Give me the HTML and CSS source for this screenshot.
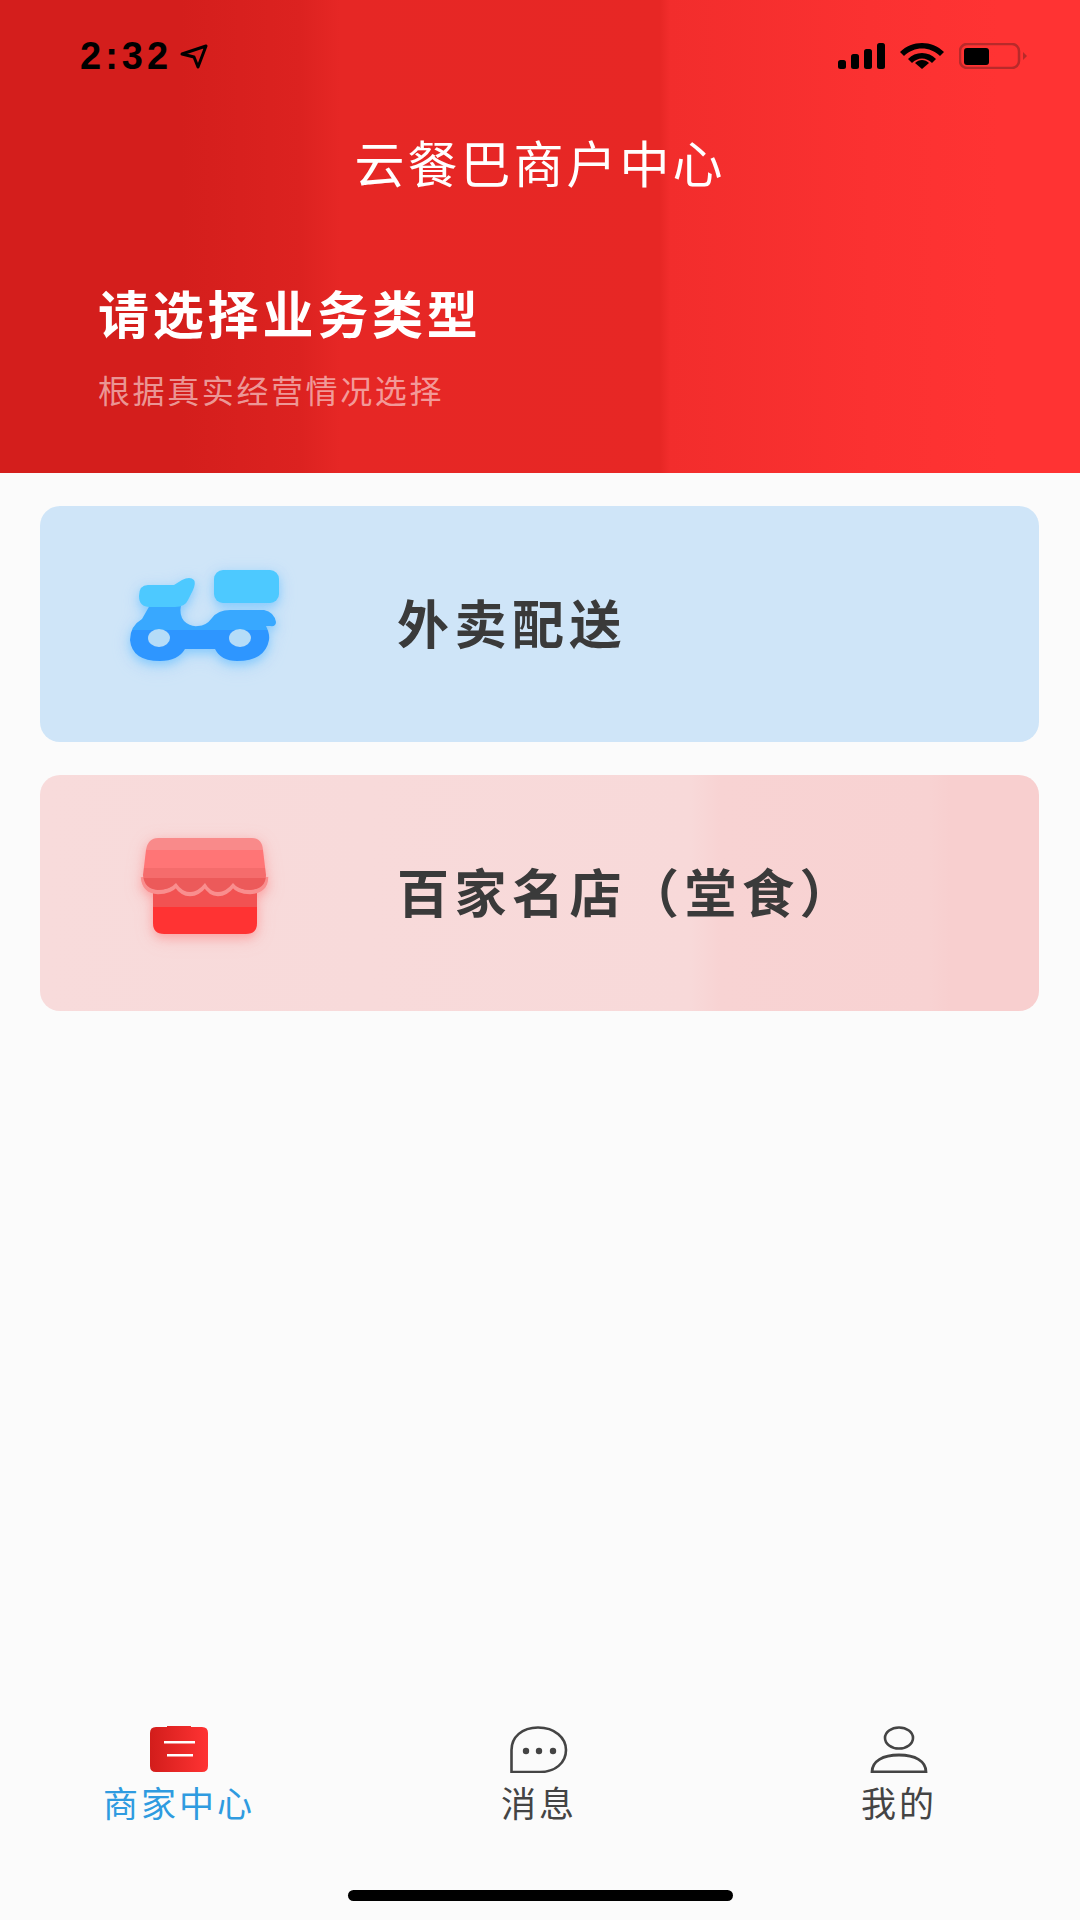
FILE: index.html
```html
<!DOCTYPE html>
<html lang="zh-CN">

<head>
    <meta charset="UTF-8">
    <title>云餐巴商户中心</title>
    <link rel="stylesheet" href="styles.css">
</head>

<body>

    <header class="top">
        <div class="status">
            <div class="status-left">
                <span class="time">2:32</span>
                <svg class="arrow" width="28" height="25" viewBox="0 0 28 25">
                    <path d="M2 10 L26 2 L18 23 L14 13 Z" fill="none" stroke="#000" stroke-width="3" stroke-linejoin="round"/>
                </svg>
            </div>
            <div class="status-right">
                <svg width="47" height="26" viewBox="0 0 47 26">
                    <rect x="0" y="17" width="8" height="9" rx="2.5"/>
                    <rect x="13" y="11" width="8" height="15" rx="2.5"/>
                    <rect x="26" y="6" width="8" height="20" rx="2.5"/>
                    <rect x="39" y="0" width="8" height="26" rx="2.5"/>
                </svg>
                <svg width="44" height="26" viewBox="0 0 44 26">
                    <path d="M0 9 C12 -3 32 -3 44 9 L40 13 C30 3 14 3 4 13 Z"/>
                    <path d="M8 16 C15 8 29 8 36 16 L32 20 C26 14 18 14 12 20 Z"/>
                    <path d="M15 20 C19 16 25 16 29 20 L22 26 Z"/>
                </svg>
                <svg width="68" height="26" viewBox="0 0 68 26">
                    <rect x="1" y="1" width="59" height="24" rx="7" fill="none" stroke="#b82a2a" stroke-width="2.5"/>
                    <rect x="5" y="5" width="25" height="17" rx="3"/>
                    <path d="M64 9 L68 13 L64 17 Z" fill="#b82a2a"/>
                </svg>
            </div>
        </div>
        <h1 class="title">云餐巴商户中心</h1>
        <h2 class="heading">请选择业务类型</h2>
        <p class="sub">根据真实经营情况选择</p>
    </header>

    <main class="cards">
        <a class="card card-blue">
            <svg class="card-icon icon-scooter" width="220" height="150" viewBox="0 0 220 150">
                <defs>
                    <linearGradient id="scooterBody" x1="0" y1="0" x2="0" y2="1">
                        <stop offset="0.44" stop-color="#38a8ff"/>
                        <stop offset="0.44" stop-color="#2e96ff"/>
                    </linearGradient>
                </defs>
                <path fill="url(#scooterBody)" d="M50 65 H81 Q79 75 84 81 Q90 87 98 86 Q106 86 112 78 Q118 70 130 70 H164 Q174 72 176 82 Q176 87 170 86 L166 86 Q170 94 169 100 Q165 121 137 121 Q121 121 115 109 H85 Q78 121 60 121 Q32 121 30 100 Q30 86 42 79 L50 65 Z"/>
                <ellipse cx="59" cy="98" rx="11" ry="9" fill="#b5dcf8"/>
                <ellipse cx="140" cy="98" rx="11" ry="9" fill="#b5dcf8"/>
                <path fill="#4dc9ff" d="M48 45 H74 L82 40 Q90 36 94 40 Q96 43 93 50 L88 60 Q85 67 75 67 H50 Q39 67 39 56 Q39 45 48 45 Z"/>
                <rect x="114" y="30" width="65" height="33" rx="9" fill="#4dc9ff"/>
            </svg>
            <span class="card-text">外卖配送</span>
        </a>
        <a class="card card-red">
            <svg class="card-icon icon-shop" width="180" height="140" viewBox="0 0 180 140">
                <defs>
                    <linearGradient id="shopBase" x1="0" y1="0" x2="0" y2="1">
                        <stop offset="0.45" stop-color="#f25252"/>
                        <stop offset="0.45" stop-color="#ff3333"/>
                    </linearGradient>
                    <linearGradient id="shopTop" x1="0" y1="0" x2="0" y2="1">
                        <stop offset="0.22" stop-color="#f98a8a"/>
                        <stop offset="0.22" stop-color="#ff7576"/>
                        <stop offset="0.55" stop-color="#ff7576"/>
                        <stop offset="0.55" stop-color="#f56c6c"/>
                        <stop offset="0.75" stop-color="#f56c6c"/>
                        <stop offset="0.75" stop-color="#ec5a5a"/>
                    </linearGradient>
                </defs>
                <path fill="url(#shopBase)" d="M33 70 H137 V108 Q137 119 126 119 H44 Q33 119 33 108 Z"/>
                <path fill="none" stroke="#f98e8e" stroke-width="4.5" d="M146 62 Q146 76 130 77 Q118 77 113 70 Q106 79 98 79 Q90 79 85 70 Q78 79 70 79 Q62 79 56 70 Q50 77 38 77 Q24 76 23 62"/>
                <path fill="url(#shopTop)" d="M38 23 H132 Q142 23 143 35 L146 60 Q146 74 130 75 Q118 75 113 68 Q106 77 98 77 Q90 77 85 68 Q78 77 70 77 Q62 77 56 68 Q50 75 38 75 Q24 74 23 60 L26 35 Q28 23 38 23 Z"/>
            </svg>
            <span class="card-text">百家名店（堂食）</span>
        </a>
    </main>

    <nav class="tabs">
        <a class="tab tab-active">
            <svg width="58" height="47" viewBox="0 0 58 47">
                <defs>
                    <linearGradient id="tabRed" x1="0" y1="0" x2="1" y2="0">
                        <stop offset="0" stop-color="#d21d1b"/>
                        <stop offset="1" stop-color="#ff3333"/>
                    </linearGradient>
                </defs>
                <path fill="url(#tabRed)" d="M6 1 H17 V0 H41 V1 H52 Q58 1 58 7 V40 Q58 46 52 46 H6 Q0 46 0 40 V7 Q0 1 6 1 Z"/>
                <rect x="14" y="15" width="31" height="2.5" fill="#fff"/>
                <rect x="17" y="28" width="26" height="2.5" fill="#fff"/>
            </svg>
            <span>商家中心</span>
        </a>
        <a class="tab">
            <svg width="58" height="47" viewBox="0 0 58 47">
                <path d="M1.5 46 V24 C1.5 11 12 1.5 28 1.5 C45 1.5 56 12 56 24 C56 37 45 46 30 46 Z" fill="none" stroke="#444" stroke-width="2.6"/>
                <circle cx="16" cy="25" r="3.2" fill="#444"/>
                <circle cx="29" cy="25" r="3.2" fill="#444"/>
                <circle cx="43" cy="25" r="3.2" fill="#444"/>
            </svg>
            <span>消息</span>
        </a>
        <a class="tab">
            <svg width="58" height="47" viewBox="0 0 58 47">
                <ellipse cx="29" cy="12" rx="14" ry="10.5" fill="none" stroke="#444" stroke-width="2.6"/>
                <path d="M2 46 C2 35 13 29 29 29 C45 29 56 35 56 46 Z" fill="none" stroke="#444" stroke-width="2.8"/>
            </svg>
            <span>我的</span>
        </a>
    </nav>

    <div class="home-bar"></div>

</body>

</html>
```

FILE: styles.css
```css
* {
    box-sizing: border-box;
}

body {
    margin: 0;
    width: 1080px;
    height: 1920px;
    display: flex;
    flex-direction: column;
    background-color: #fbfbfb;
    font-family: "Liberation Sans", "Noto Sans CJK SC", sans-serif;
    overflow: hidden;
}

.top {
    height: 473px;
    padding-top: 43px;
    background-image: linear-gradient(90deg, #d41e1c 0, #d41e1c 180px, #dc2220 300px, #e62725 340px, #e72725 660px, #f22d2c 670px, #fb3131 870px, #ff3333 1000px);
}

.status {
    height: 26px;
    padding: 0 53px 0 80px;
    display: flex;
    justify-content: space-between;
    align-items: center;
}

.status-left {
    display: flex;
    align-items: center;
    gap: 8px;
}

.time {
    font-size: 38px;
    line-height: 26px;
    font-weight: bold;
    letter-spacing: 4px;
    color: #000;
}

.arrow {
    display: block;
}

.status-right {
    display: flex;
    gap: 15px;
}

.status-right svg {
    display: block;
}

.title {
    margin: 67px 0 0;
    text-align: center;
    font-size: 50px;
    line-height: 60px;
    font-weight: normal;
    letter-spacing: 3px;
    color: #fff;
}

.heading {
    margin: 91px 0 0 98px;
    font-size: 51px;
    line-height: 60px;
    font-weight: bold;
    letter-spacing: 3.8px;
    color: #fff;
}

.sub {
    margin: 25px 0 0 98px;
    font-size: 32px;
    line-height: 40px;
    letter-spacing: 2.6px;
    color: rgba(255, 255, 255, 0.55);
}

.cards {
    flex: 1;
    padding: 33px 41px 0 40px;
    display: flex;
    flex-direction: column;
    gap: 33px;
}

.card {
    height: 236px;
    border-radius: 20px;
    display: flex;
    align-items: center;
    position: relative;
}

.card-blue {
    background-color: #cfe5f8;
}

.card-red {
    background-image: linear-gradient(90deg, #f8dbdb 0, #f8d9d9 650px, #f8d3d3 680px, #f8d2d2 890px, #f8cfcf 910px);
}

.card-icon {
    position: absolute;
    display: block;
}

.icon-scooter {
    left: 60px;
    top: 34px;
    filter: drop-shadow(0 4px 5px rgba(90, 185, 255, 0.5)) drop-shadow(0 3px 8px rgba(130, 200, 255, 0.35));
}

.icon-shop {
    left: 80px;
    top: 40px;
    filter: drop-shadow(0 4px 5px rgba(255, 90, 90, 0.3)) drop-shadow(0 3px 8px rgba(255, 120, 120, 0.25));
}

.card-text {
    margin: 4px 0 0 357px;
    font-size: 52px;
    line-height: 60px;
    font-weight: bold;
    letter-spacing: 5.5px;
    color: #3a3a3a;
}

.tabs {
    height: 115px;
    margin-left: -1px;
    display: grid;
    grid-template-columns: repeat(3, 360px);
}

.tab {
    display: flex;
    flex-direction: column;
    align-items: center;
    font-size: 35px;
    line-height: 44px;
    letter-spacing: 3px;
    color: #444;
}

.tab svg {
    display: block;
    margin-bottom: 10px;
}

.tab-active {
    color: #2f9be0;
}

.home-bar {
    width: 385px;
    height: 11px;
    margin: 49px auto 19px;
    border-radius: 6px;
    background-color: #000;
}
```
